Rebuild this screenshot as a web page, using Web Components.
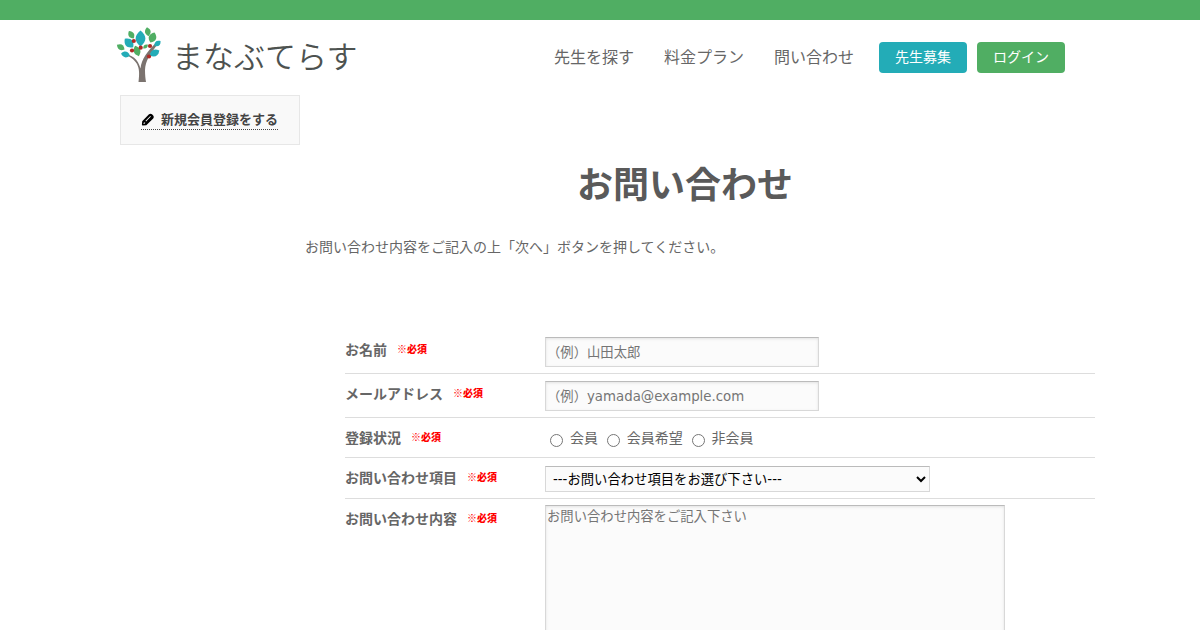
<!DOCTYPE html>
<html lang="ja">
<head>
<meta charset="utf-8">
<meta name="viewport" content="width=device-width, initial-scale=1">
<title>お問い合わせ | まなぶてらす</title>
<style>
html { overflow-x: hidden; }
body {
  margin: 0;
  background: #fff;
  color: #666;
  font: 14px/20px "DejaVu Sans", "Noto Sans CJK JP", sans-serif;
}
</style>
</head>
<body>
<contact-page></contact-page>
<script>
const define = (name, html) => {
  const template = document.createElement('template');
  template.innerHTML = html;
  customElements.define(name, class extends HTMLElement {
    constructor() {
      super();
      this.attachShadow({ mode: 'open' }).append(template.content.cloneNode(true));
    }
  });
};

define('site-logo', `
<style>
:host { display: block; }
a { display: flex; align-items: center; gap: 10px; color: #4d5250; text-decoration: none; }
svg { display: block; width: 46px; height: 56px; }
span { font: 350 31px/40px "Noto Sans CJK JP", sans-serif; white-space: nowrap; }
</style>
<a href="#">
  <svg viewBox="0 0 46 56" aria-hidden="true">
    <path fill="#7b736f" d="M4.500 26.500C14 27.500 20 32 22.500 41.500C23.500 32 29 25 39.500 14L41.300 15.500C31.500 27 27.500 34 27 43C27 48 27.500 52 28 55H20.500C21.500 47 21.500 42 19 37C16 32 12 29.500 4.500 26.500Z" transform="translate(2 0)"/>
    <g fill="#50ae63">
      <path d="M0 -4.500C3.800 -1.500 3.800 1.500 0 4.500C-3.800 1.500 -3.800 -1.500 0 -4.500Z" transform="translate(4.700 20.200) rotate(-58)"/>
      <path d="M0 -4.500C3.800 -1.500 3.800 1.500 0 4.500C-3.800 1.500 -3.800 -1.500 0 -4.500Z" transform="translate(15.300 7.800) rotate(-32)"/>
      <path d="M0 -4.500C3.800 -1.500 3.800 1.500 0 4.500C-3.800 1.500 -3.800 -1.500 0 -4.500Z" transform="translate(31.800 4.700) rotate(-10)"/>
      <path d="M0 -5.500C5 -2 5 2 0 5.500C-5 2 -5 -2 0 -5.500Z" transform="translate(36.500 10.500) rotate(22)"/>
      <path d="M0 -5.500C4.500 -2 4.500 2 0 5.500C-4.500 2 -4.500 -2 0 -5.500Z" transform="translate(21 24) rotate(-20)"/>
      <path d="M0 -3C2.400 -1 2.400 1 0 3C-2.400 1 -2.400 -1 0 -3Z" transform="translate(29.500 19.500) rotate(50)"/>
    </g>
    <g fill="#23acb7">
      <path d="M0 -8C6.500 -3 6.500 3 0 8C-6.500 3 -6.500 -3 0 -8Z" transform="translate(24.500 11.500)"/>
      <path d="M0 -6C5.400 -2 5.400 2 0 6C-5.400 2 -5.400 -2 0 -6Z" transform="translate(13 16) rotate(-45)"/>
      <path d="M0 -4.500C3.800 -2 3.800 2 0 4.500C-3.800 2 -3.800 -2 0 -4.500Z" transform="translate(9.500 27.500) rotate(-78)"/>
      <path d="M0 -4C3.500 -1.500 3.500 1.500 0 4C-3.500 1.500 -3.500 -1.500 0 -4Z" transform="translate(41.500 16.500) rotate(50)"/>
      <path d="M0 -5.500C4.500 -2 4.500 2 0 5.500C-4.500 2 -4.500 -2 0 -5.500Z" transform="translate(38.500 26) rotate(62)"/>
    </g>
    <g fill="#b02a25">
      <circle cx="17.800" cy="14" r="2.100"/><circle cx="16" cy="23.500" r="2.100"/>
      <circle cx="24.700" cy="20.700" r="2.100"/><circle cx="34" cy="19" r="2.100"/>
      <circle cx="33" cy="29.500" r="2.100"/>
    </g>
  </svg>
  <span>まなぶてらす</span>
</a>`);

define('nav-button', `
<style>
:host { display: block; --fill: #23acb7; }
:host([tone="green"]) { --fill: #50ae63; }
button {
  display: block; box-sizing: border-box; height: 31px; padding: 0 16px 2px;
  border: 0; border-radius: 4px; background: var(--fill); color: #fff; cursor: pointer;
  font: 400 14px/29px "Noto Sans CJK JP", sans-serif; white-space: nowrap;
}
</style>
<button type="button"><slot></slot></button>`);

define('site-header', `
<style>
:host { display: block; border-top: 20px solid #50ae63; }
header {
  box-sizing: border-box; max-width: 968px; min-height: 75px; margin: 0 auto; padding: 7px 19px 0 0;
  display: flex; align-items: flex-start; justify-content: space-between;
}
nav { display: flex; align-items: flex-start; gap: 10px; padding-top: 15px; }
ul { display: flex; gap: 30px; margin: 0 15px 0 0; padding: 2px 0 0; list-style: none; }
ul a { display: block; color: #666; font: 16px/24px "Noto Sans CJK JP", sans-serif; text-decoration: none; white-space: nowrap; }
</style>
<header>
  <site-logo></site-logo>
  <nav>
    <ul>
      <li><a href="#">先生を探す</a></li>
      <li><a href="#">料金プラン</a></li>
      <li><a href="#">問い合わせ</a></li>
    </ul>
    <nav-button>先生募集</nav-button>
    <nav-button tone="green">ログイン</nav-button>
  </nav>
</header>`);

define('signup-box', `
<style>
:host {
  display: flex; box-sizing: border-box; min-height: 50px; padding: 14px 20px 0;
  border: 1px solid #e7e7e7; background: #f9f9f9;
}
a {
  display: flex; align-items: center; gap: 7px; height: 19px;
  border-bottom: 1px dotted #444; color: #444; text-decoration: none;
  font-weight: 700; font-size: 13px; line-height: 18px; white-space: nowrap;
}
svg { display: block; width: 13px; height: 13px; }
</style>
<a href="#">
  <svg viewBox="0 0 13 13" aria-hidden="true">
    <path fill="#000" fill-rule="evenodd" d="M8 1.300Q9.500 .2 11 1.300L12.200 2.500Q13.300 4 12.200 5.500L5.300 12.200L1.700 12.600Q.8 12.600 .9 11.700L1.200 8.200ZM9.300 3L4.500 7.800L5.100 8.400L9.900 3.600ZM2.900 9.400L2.400 10.900L4 10.600L4.200 9.600Z"/>
  </svg>
  <span>新規会員登録をする</span>
</a>`);

define('required-mark', `
<style>
:host { display: inline-block; margin-left: 10px; color: #f00; font-weight: 900; font-size: 10px; line-height: 18px; vertical-align: top; font-family: "Noto Sans CJK JP", sans-serif; }
</style>
※必須`);

define('form-row', `
<style>
:host {
  display: grid; grid-template-columns: 200px minmax(0, 1fr); align-items: start;
  border-bottom: 1px solid #ddd;
}
.name { padding: 10px 0 9px; font-weight: 700; line-height: 20px; white-space: nowrap; }
.field { padding: 7px 0 6px; }
:host([kind="select"]) .field { padding-top: 8px; }
:host([kind="area"]) .field { padding-top: 6px; }
:host([kind="choice"]) .field { padding: 10px 0 9px; }
</style>
<div class="name"><slot name="name"></slot></div>
<div class="field"><slot></slot></div>`);

define('contact-form', `
<style>
:host { display: block; }
input[type=text], input[type=email], select, textarea {
  display: block; box-sizing: border-box; max-width: 100%; margin: 0;
  border: 1px solid #d8d8d8; border-top-color: #bbb; border-radius: 0; background: #fbfbfb;
  box-shadow: inset 0 1px 3px rgba(0, 0, 0, .1);
  font-family: "DejaVu Sans", "Noto Sans CJK JP", sans-serif;
}
input[type=text], input[type=email] { width: 274px; height: 30px; padding: 1px; }
::placeholder { color: #757575; }
select { width: 385px; height: 26px; padding: 0 0 0 3px; color: #000; box-shadow: none; }
textarea { width: 460px; height: 220px; padding: 1px; resize: none; line-height: 20px; }
input[type=radio] { margin: 3px 3px 0 5px; vertical-align: -4px; }
.choices { line-height: 20px; font-family: "Liberation Sans", "Noto Sans CJK JP", sans-serif; }
</style>
<form>
  <form-row>
    <label slot="name" for="name">お名前<required-mark></required-mark></label>
    <input id="name" type="text" placeholder="（例）山田太郎">
  </form-row>
  <form-row>
    <label slot="name" for="mail">メールアドレス<required-mark></required-mark></label>
    <input id="mail" type="email" placeholder="（例）yamada@example.com">
  </form-row>
  <form-row kind="choice">
    <span slot="name" id="status">登録状況<required-mark></required-mark></span>
    <div class="choices" role="radiogroup" aria-labelledby="status">
      <label><input type="radio" name="status" value="member"> 会員</label>
      <label><input type="radio" name="status" value="applicant"> 会員希望</label>
      <label><input type="radio" name="status" value="guest"> 非会員</label>
    </div>
  </form-row>
  <form-row kind="select">
    <label slot="name" for="topic">お問い合わせ項目<required-mark></required-mark></label>
    <select id="topic"><option>---お問い合わせ項目をお選び下さい---</option></select>
  </form-row>
  <form-row kind="area">
    <label slot="name" for="body">お問い合わせ内容<required-mark></required-mark></label>
    <textarea id="body" placeholder="お問い合わせ内容をご記入下さい"></textarea>
  </form-row>
</form>`);

define('contact-page', `
<style>
:host { display: block; }
.columns { display: grid; grid-template-columns: 180px minmax(0, 1fr); gap: 5px; max-width: 960px; margin: 0 auto; align-items: start; }
h1 { margin: 0; padding: 67px 15px 0 0; text-align: center; color: #5a5a5a; font-size: 36px; line-height: 48px; }
p { margin: 27px 0 0; line-height: 20px; }
contact-form { margin: 73px -15px 0 40px; }
</style>
<site-header></site-header>
<div class="columns">
  <aside><signup-box></signup-box></aside>
  <main>
    <h1>お問い合わせ</h1>
    <p>お問い合わせ内容をご記入の上「次へ」ボタンを押してください。</p>
    <contact-form></contact-form>
  </main>
</div>`);
</script>
</body>
</html>
